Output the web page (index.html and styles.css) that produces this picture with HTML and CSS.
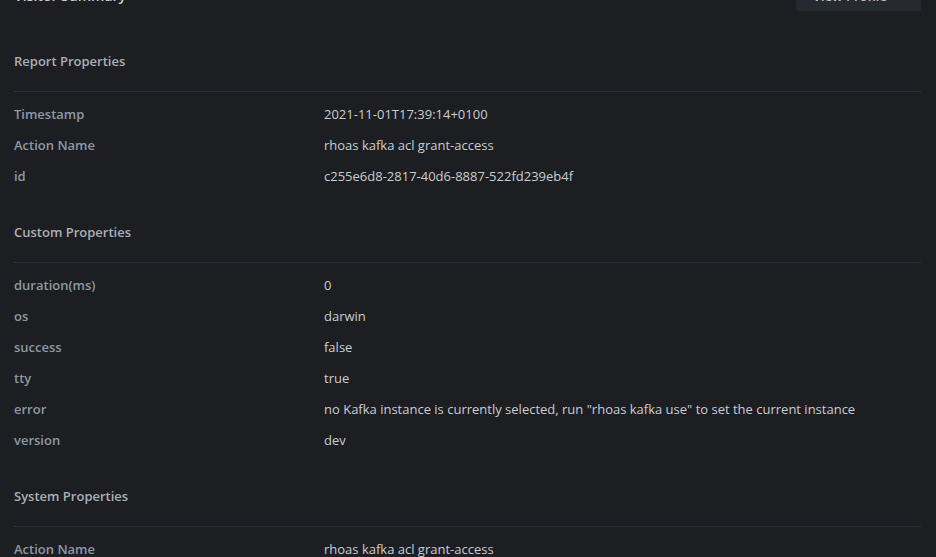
FILE: index.html
```html
<!DOCTYPE html>
<html lang="en">
<head>
<meta charset="utf-8">
<title>Visitor Summary</title>
<link rel="stylesheet" href="styles.css">
</head>
<body>
<div class="page">
  <div class="topbar">
    <h1 class="title">Visitor Summary</h1>
    <button class="btn"><span>View Profile</span>
      <svg class="chev" width="8" height="12" viewBox="0 0 8 12"><path d="M2 1.5 L6.5 6 L2 10.5" fill="none" stroke="currentColor" stroke-width="1.6" stroke-linecap="round" stroke-linejoin="round"/></svg>
    </button>
  </div>

  <section class="section">
    <h2 class="section-title">Report Properties</h2>
    <dl class="props">
      <div class="row"><dt>Timestamp</dt><dd>2021-11-01T17:39:14+0100</dd></div>
      <div class="row"><dt>Action Name</dt><dd>rhoas kafka acl grant-access</dd></div>
      <div class="row"><dt>id</dt><dd>c255e6d8-2817-40d6-8887-522fd239eb4f</dd></div>
    </dl>
  </section>

  <section class="section">
    <h2 class="section-title">Custom Properties</h2>
    <dl class="props">
      <div class="row"><dt>duration(ms)</dt><dd>0</dd></div>
      <div class="row"><dt>os</dt><dd>darwin</dd></div>
      <div class="row"><dt>success</dt><dd>false</dd></div>
      <div class="row"><dt>tty</dt><dd>true</dd></div>
      <div class="row"><dt>error</dt><dd>no Kafka instance is currently selected, run "rhoas kafka use" to set the current instance</dd></div>
      <div class="row"><dt>version</dt><dd>dev</dd></div>
    </dl>
  </section>

  <section class="section">
    <h2 class="section-title">System Properties</h2>
    <dl class="props">
      <div class="row"><dt>Action Name</dt><dd>rhoas kafka acl grant-access</dd></div>
    </dl>
  </section>
</div>
</body>
</html>
```

FILE: styles.css
```css
html, body {
  margin: 0;
  padding: 0;
  background: #1d1e22;
  overflow: hidden;
}
body {
  font-family: "Open Sans", "Noto Sans", sans-serif;
  font-size: 13px;
  color: #c9cdd2;
}
.page {
  padding: 0 15px 0 14px;
  margin-top: -23px;
}
.topbar {
  display: flex;
  justify-content: space-between;
  align-items: center;
  height: 34px;
  margin-bottom: 9px;
}
.title {
  margin: 0;
  font-size: 14px;
  font-weight: 600;
  color: #c9cdd2;
  line-height: 20px;
  padding-top: 4px;
}
.btn {
  height: 34px;
  width: 125px;
  border: none;
  border-radius: 3px;
  background: #262a2e;
  color: #b9bfc6;
  font-family: inherit;
  font-size: 13px;
  font-weight: 600;
  display: flex;
  align-items: center;
  justify-content: flex-end;
  gap: 13px;
  padding: 0 13px 0 0;
}
.btn span { padding-top: 3px; }
.chev { color: #8b96a0; }
.section {
  padding-top: 31px;
}
.section-title {
  margin: 0;
  font-size: 13px;
  font-weight: 600;
  line-height: 20px;
  color: #a9afb7;
  padding-bottom: 20px;
  border-bottom: 1px solid #2c2e33;
}
.props {
  margin: 0;
  padding-top: 6px;
}
.row {
  display: grid;
  grid-template-columns: 310px 1fr;
  height: 31px;
  align-items: center;
}
dt {
  font-weight: 600;
  color: #8b99a5;
}
dd {
  margin: 0;
  color: #c9cdd2;
}
```
